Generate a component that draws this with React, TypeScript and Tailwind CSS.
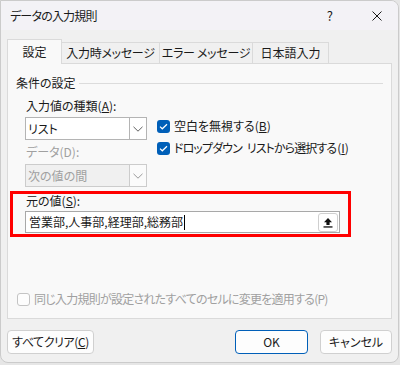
import React from "react";

function Chevron({ disabled }: { disabled?: boolean }) {
  return (
    <svg width="10" height="6" viewBox="0 0 10 6" fill="none">
      <path d="M0.5 0.8L5 5.2L9.5 0.8" stroke={disabled ? "#9a9a9a" : "#606060"} strokeWidth="1" />
    </svg>
  );
}

function Checked() {
  return (
    <span className="flex h-[13px] w-[13px] shrink-0 items-center justify-center rounded-[3px] bg-[#005fb8]">
      <svg width="9" height="7" viewBox="0 0 9 7" fill="none">
        <path d="M1 3.6L3.3 5.8L8 1.2" stroke="white" strokeWidth="1.2" />
      </svg>
    </span>
  );
}

function Select({ value, disabled }: { value: string; disabled?: boolean }) {
  return (
    <div
      className={
        disabled
          ? "flex h-[23px] w-[122px] border border-[#cccccc] bg-[#f0f0f0] text-[#a0a0a0]"
          : "flex h-[23px] w-[122px] border border-[#b4b4b4] bg-white"
      }
    >
      <div className="flex flex-1 items-center pl-[2px]">{value}</div>
      <div
        className={
          disabled
            ? "flex w-[17px] items-center justify-center border-l border-[#cccccc] bg-[#fbfbfb]"
            : "flex w-[17px] items-center justify-center border-l border-[#b4b4b4] bg-white"
        }
      >
        <Chevron disabled={disabled} />
      </div>
    </div>
  );
}

export default function App() {
  return (
    <div className="h-[365px] w-[400px] overflow-hidden bg-[#e6e6e6] font-['Noto_Sans_CJK_JP',sans-serif] text-[12px] text-[#1a1a1a] [font-feature-settings:'palt']">
      <div className="h-[363px] w-[399px] overflow-hidden rounded-tr-[8px] rounded-b-[8px] border border-[#cbcbcb] bg-[#f0f0f0]">
        {/* title bar */}
        <div className="flex h-[29px] items-center bg-[#f3f2f6] pl-[9px]">
          <span className="leading-none tracking-[-0.8px]">データの入力規則</span>
          <span className="ml-auto mr-[39px] text-[13px] leading-none">?</span>
          <svg className="mr-[16px]" width="10" height="10" viewBox="0 0 10 10" fill="none">
            <path d="M0.5 0.5L9.5 9.5M9.5 0.5L0.5 9.5" stroke="#1a1a1a" strokeWidth="1" />
          </svg>
        </div>

        <div className="px-[6px] pt-[9px]">
          {/* tabs */}
          <div className="flex h-[25px] items-end">
            <div className="relative z-20 flex h-[25px] w-[55px] items-center justify-center border-l border-r border-t border-[#dadada] bg-[#f9f9f9] pb-px">
              設定
            </div>
            <div className="flex h-[22px] w-[98px] items-center justify-center border-r border-t border-[#dadada] pb-[2px] tracking-[-0.3px]">
              入力時メッセージ
            </div>
            <div className="flex h-[22px] w-[93px] items-center justify-center border-r border-t border-[#dadada] pb-[2px] tracking-[-0.3px]">
              エラー メッセージ
            </div>
            <div className="flex h-[22px] w-[76px] items-center justify-center border-r border-t border-[#dadada] pb-[2px]">
              日本語入力
            </div>
          </div>

          {/* panel */}
          <div className="relative z-10 -mt-px h-[256px] border border-[#dadada] bg-[#f9f9f9]">
            <div className="mt-[11px] flex h-[16px] items-center pl-[8px] pr-[8px]">
              <span>条件の設定</span>
              <span className="ml-[3px] h-px flex-1 bg-[#dcdcdc]" />
            </div>

            <div className="ml-[17px] mt-[7px] flex">
              <div className="w-[122px]">
                <div className="h-[16px] pl-px leading-[16px]">
                  入力値の種類(<span className="underline">A</span>):
                </div>
                <div className="mt-[3px]">
                  <Select value="リスト" />
                </div>
                <div className="mt-[4px] h-[16px] pl-px leading-[16px] text-[#a0a0a0]">データ(D):</div>
                <div className="mt-[4px]">
                  <Select value="次の値の間" disabled />
                </div>
              </div>
              <div className="ml-[10px] pt-[20px]">
                <div className="flex h-[16px] items-center gap-[4px]">
                  <Checked />
                  <span>
                    空白を無視する(<span className="underline">B</span>)
                  </span>
                </div>
                <div className="mt-[6px] flex h-[16px] items-center gap-[4px]">
                  <Checked />
                  <span className="flex">
                    <span className="tracking-[-0.9px]">ドロップダウン</span>
                    <span className="ml-[5px] tracking-[-0.9px]">リストから選択する</span>
                    <span className="ml-px">
                      (<span className="underline">I</span>)
                    </span>
                  </span>
                </div>
              </div>
            </div>

            {/* highlighted source box */}
            <div className="ml-[2px] mt-[4px] w-[341px] border-[3px] border-[#ff0000] pb-px pl-[12px]">
              <div className="h-[14px] pl-px leading-[14px]">
                元の値(<span className="underline">S</span>):
              </div>
              <div className="mt-[3px] flex h-[22px] w-[315px] items-center border border-[#a8a8a8] bg-white pl-[3px] pr-px">
                <span>営業部,人事部,経理部,総務部</span>
                <span className="ml-px h-[15px] w-px bg-black" />
                <div className="ml-auto flex h-[19px] w-[20px] items-center justify-center rounded-[3px] border border-[#cfcfcf] bg-white">
                  <svg width="10" height="11" viewBox="0 0 10 11" fill="none">
                    <path d="M5 1L1 5.2H3.4V8H6.6V5.2H9Z" fill="#111" />
                    <rect x="0.5" y="9.3" width="9" height="1.3" fill="#111" />
                  </svg>
                </div>
              </div>
            </div>

            <div className="ml-[9px] mt-[54px] flex h-[16px] items-center gap-[4px] text-[#a0a0a0]">
              <span className="h-[13px] w-[13px] rounded-[3px] border border-[#c4c4c4] bg-[#fdfdfd]" />
              <span className="tracking-[-0.75px]">同じ入力規則が設定されたすべてのセルに変更を適用する(P)</span>
            </div>
          </div>

          {/* buttons */}
          <div className="mt-[11px] flex items-center">
            <button className="flex h-[24px] w-[87px] items-center justify-center rounded-[4px] border border-[#d0d0d0] bg-[#fdfdfd] tracking-[-0.4px]">
              すべてクリア(<span className="underline">C</span>)
            </button>
            <button className="ml-auto flex h-[24px] w-[73px] items-center justify-center rounded-[4px] border border-[#005fb8] bg-[#fdfdfd]">
              OK
            </button>
            <button className="ml-[12px] flex h-[24px] w-[72px] items-center justify-center rounded-[4px] border border-[#d0d0d0] bg-[#fdfdfd]">
              キャンセル
            </button>
          </div>
        </div>
      </div>
    </div>
  );
}
